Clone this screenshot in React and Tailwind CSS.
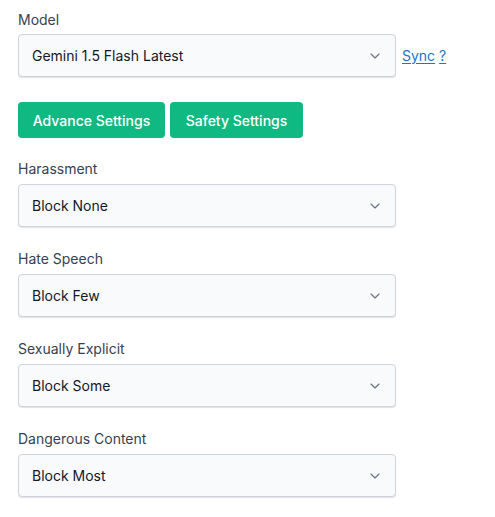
import { ChevronDown } from "lucide-react";

const safety = [
  { label: "Harassment", value: "Block None" },
  { label: "Hate Speech", value: "Block Few" },
  { label: "Sexually Explicit", value: "Block Some" },
  { label: "Dangerous Content", value: "Block Most" },
];

const Select = ({ value }) => (
  <div className="flex h-[43px] w-[378px] items-center justify-between rounded-[4px] border border-[#d1d5db] bg-[#f9fafb] pl-[13px] pr-[12px] shadow-[0_1px_1px_rgba(0,0,0,0.12)]">
    <span className="text-[14px] text-[#111827]">{value}</span>
    <ChevronDown className="h-4 w-4 text-[#6b7280]" strokeWidth={1.75} />
  </div>
);

export default function App() {
  return (
    <div
      className="min-h-[517px] bg-white px-[18px] pt-[10px]"
      style={{ fontFamily: "Inter, 'Noto Sans', sans-serif" }}
    >
      {/* Model */}
      <label className="mb-[4px] block h-5 text-[14px] leading-5 text-[#374151]">
        Model
      </label>
      <div className="flex items-center gap-[6px]">
        <Select value="Gemini 1.5 Flash Latest" />
        <div className="text-[14px] text-[#2374c6]">
          <a className="underline underline-offset-2">Sync</a>{" "}
          <a className="underline underline-offset-2">?</a>
        </div>
      </div>

      {/* Tabs */}
      <div className="mt-[25px] flex gap-[5px]">
        <button className="h-9 w-[147px] rounded-[4px] bg-[#10b981] text-[14px] font-medium text-white">
          Advance Settings
        </button>
        <button className="h-9 w-[133px] rounded-[4px] bg-[#10b981] text-[14px] font-medium text-white">
          Safety Settings
        </button>
      </div>

      {/* Safety settings */}
      <div className="mt-[21px]">
        {safety.map((item, i) => (
          <div key={item.label} className={i === 0 ? "" : "mt-[22px]"}>
            <label className="mb-[5px] block h-5 text-[14px] leading-5 text-[#374151]">
              {item.label}
            </label>
            <Select value={item.value} />
          </div>
        ))}
      </div>
    </div>
  );
}
